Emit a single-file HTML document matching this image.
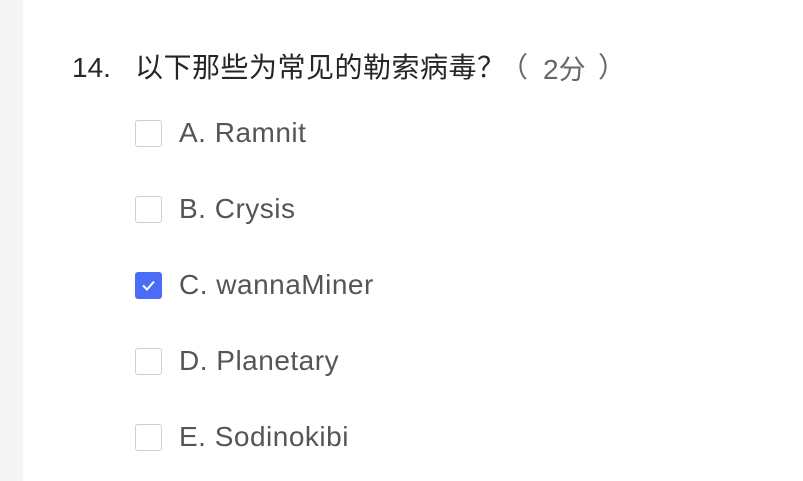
<!DOCTYPE html>
<html><head><meta charset="utf-8"><style>
body{margin:0;width:803px;height:481px;background:#fff;position:relative;overflow:hidden;font-family:"Liberation Sans","Noto Sans CJK SC",sans-serif;}
.strip{position:absolute;left:0;top:0;width:23px;height:481px;background:#f4f4f5;}
.t{position:absolute;font-size:27px;color:#262626;line-height:30px;top:53px;white-space:nowrap;}
.score{color:#666;}
.row{position:absolute;left:135px;height:28px;}
.cb{position:absolute;left:0;top:0;width:27px;height:27px;border:1.5px solid #cfcfcf;border-radius:3px;box-sizing:border-box;background:#fff;}
.cb.on{background:#4a6cf7;border-color:#4a6cf7;}
.lab{position:absolute;left:44px;top:-2px;font-size:28px;letter-spacing:0.5px;color:#555;white-space:nowrap;line-height:30px;}
</style></head><body>
<div class="strip"></div>
<div class="t" style="left:72px;font-size:28px">14.</div>
<div class="t" style="left:135px;font-family:'Noto Sans CJK SC',sans-serif;font-size:28px;top:51px;letter-spacing:0.5px">以下那些为常见的勒索病毒？</div>
<div class="t score" style="left:500px;font-family:'Noto Sans CJK SC',sans-serif;font-size:28px;top:51px">（</div>
<div class="t score" style="left:543px;font-size:28px">2<span style="font-family:'Noto Sans CJK SC',sans-serif;font-size:27px">分</span></div>
<div class="t score" style="left:598px;font-family:'Noto Sans CJK SC',sans-serif;font-size:28px;top:51px">）</div>
<div class="row" style="top:120px"><div class="cb"></div><div class="lab">A. Ramnit</div></div>
<div class="row" style="top:196px"><div class="cb"></div><div class="lab">B. Crysis</div></div>
<div class="row" style="top:272px"><div class="cb on"><svg width="27" height="27" viewBox="0 0 27 27" style="position:absolute;left:-1.5px;top:-1.5px"><path d="M8 13.5l4 4 7-8" stroke="#fff" stroke-width="2" fill="none"/></svg></div><div class="lab">C. wannaMiner</div></div>
<div class="row" style="top:348px"><div class="cb"></div><div class="lab">D. Planetary</div></div>
<div class="row" style="top:424px"><div class="cb"></div><div class="lab">E. Sodinokibi</div></div>
</body></html>
